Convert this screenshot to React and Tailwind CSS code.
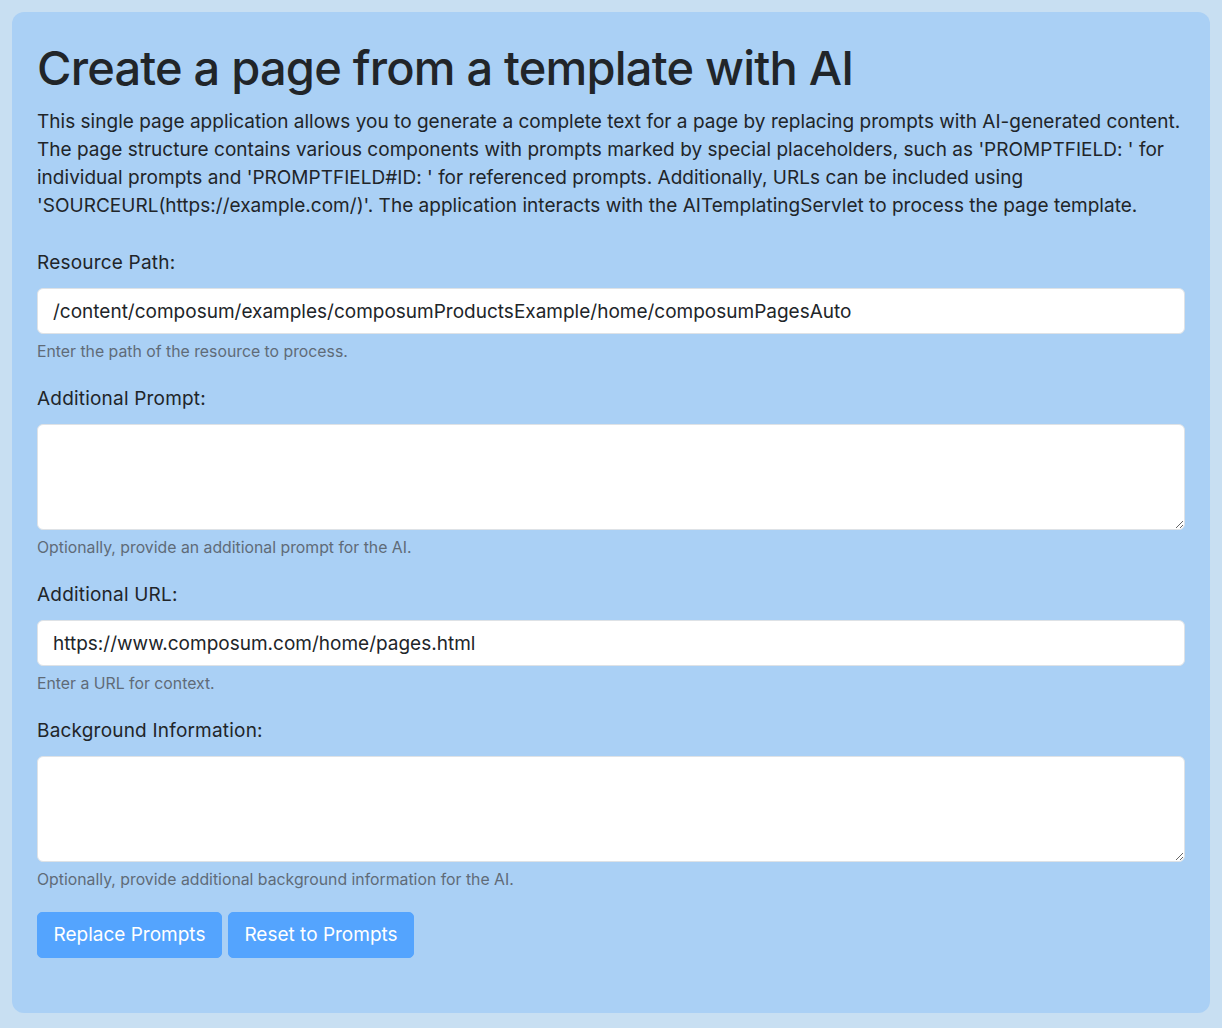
import { useState } from "react";

const LABEL = "block text-[19px] leading-[28px] tracking-[0.2px] text-[#212529] mb-[11px]";
const CONTROL =
  "block w-full bg-white border border-[#dee2e6] rounded-[6px] px-[15px] text-[19px] text-[#212529] outline-none";
const HINT = "block mt-[7px] text-[15.8px] leading-[22px] text-[#5f6b78]";
const BUTTON =
  "h-[46px] px-[15.5px] bg-[#54a4fe] text-white text-[19px] rounded-[5px] border border-[#54a4fe]";

function Field({ label, hint, children }) {
  // one labelled form group with hint text below
  return (
    <div className="mb-[22px]">
      <label className={LABEL}>{label}</label>
      {children}
      <small className={HINT}>{hint}</small>
    </div>
  );
}

export default function App() {
  const [path, setPath] = useState(
    "/content/composum/examples/composumProductsExample/home/composumPagesAuto"
  );
  const [prompt, setPrompt] = useState("");
  const [url, setUrl] = useState("https://www.composum.com/home/pages.html");
  const [background, setBackground] = useState("");

  return (
    <div
      className="min-h-[1028px] bg-[#c8dff2] p-[12px]"
      style={{ fontFamily: "Inter, 'Noto Sans', sans-serif" }}
    >
      <div className="bg-[#aad0f5] rounded-[12px] px-[25px] pt-[27px] pb-[55px]">
        <h1 className="text-[47px] leading-[57px] font-medium text-[#212529] mb-[12px] tracking-[-0.8px]">
          Create a page from a template with AI
        </h1>
        <p className="text-[19px] leading-[28px] tracking-[0.02px] text-[#212529] mb-[29px]">
          This single page application allows you to generate a complete text for a page by
          replacing prompts with AI-generated content. The page structure contains various
          components with prompts marked by special placeholders, such as 'PROMPTFIELD: ' for
          individual prompts and 'PROMPTFIELD#ID: ' for referenced prompts. Additionally, URLs
          can be included using 'SOURCEURL(https://example.com/)'. The application interacts
          with the AITemplatingServlet to process the page template.
        </p>

        <Field label="Resource Path:" hint="Enter the path of the resource to process.">
          <input
            type="text"
            value={path}
            onChange={(e) => setPath(e.target.value)}
            className={`${CONTROL} h-[46px]`}
          />
        </Field>

        <Field label="Additional Prompt:" hint="Optionally, provide an additional prompt for the AI.">
          <textarea
            value={prompt}
            onChange={(e) => setPrompt(e.target.value)}
            className={`${CONTROL} h-[106px] py-[9px]`}
          />
        </Field>

        <Field label="Additional URL:" hint="Enter a URL for context.">
          <input
            type="text"
            value={url}
            onChange={(e) => setUrl(e.target.value)}
            className={`${CONTROL} h-[46px]`}
          />
        </Field>

        <Field
          label="Background Information:"
          hint="Optionally, provide additional background information for the AI."
        >
          <textarea
            value={background}
            onChange={(e) => setBackground(e.target.value)}
            className={`${CONTROL} h-[106px] py-[9px]`}
          />
        </Field>

        <div className="flex gap-[6px] -mt-[1px]">
          <button className={BUTTON}>Replace Prompts</button>
          <button className={BUTTON}>Reset to Prompts</button>
        </div>
      </div>
    </div>
  );
}
